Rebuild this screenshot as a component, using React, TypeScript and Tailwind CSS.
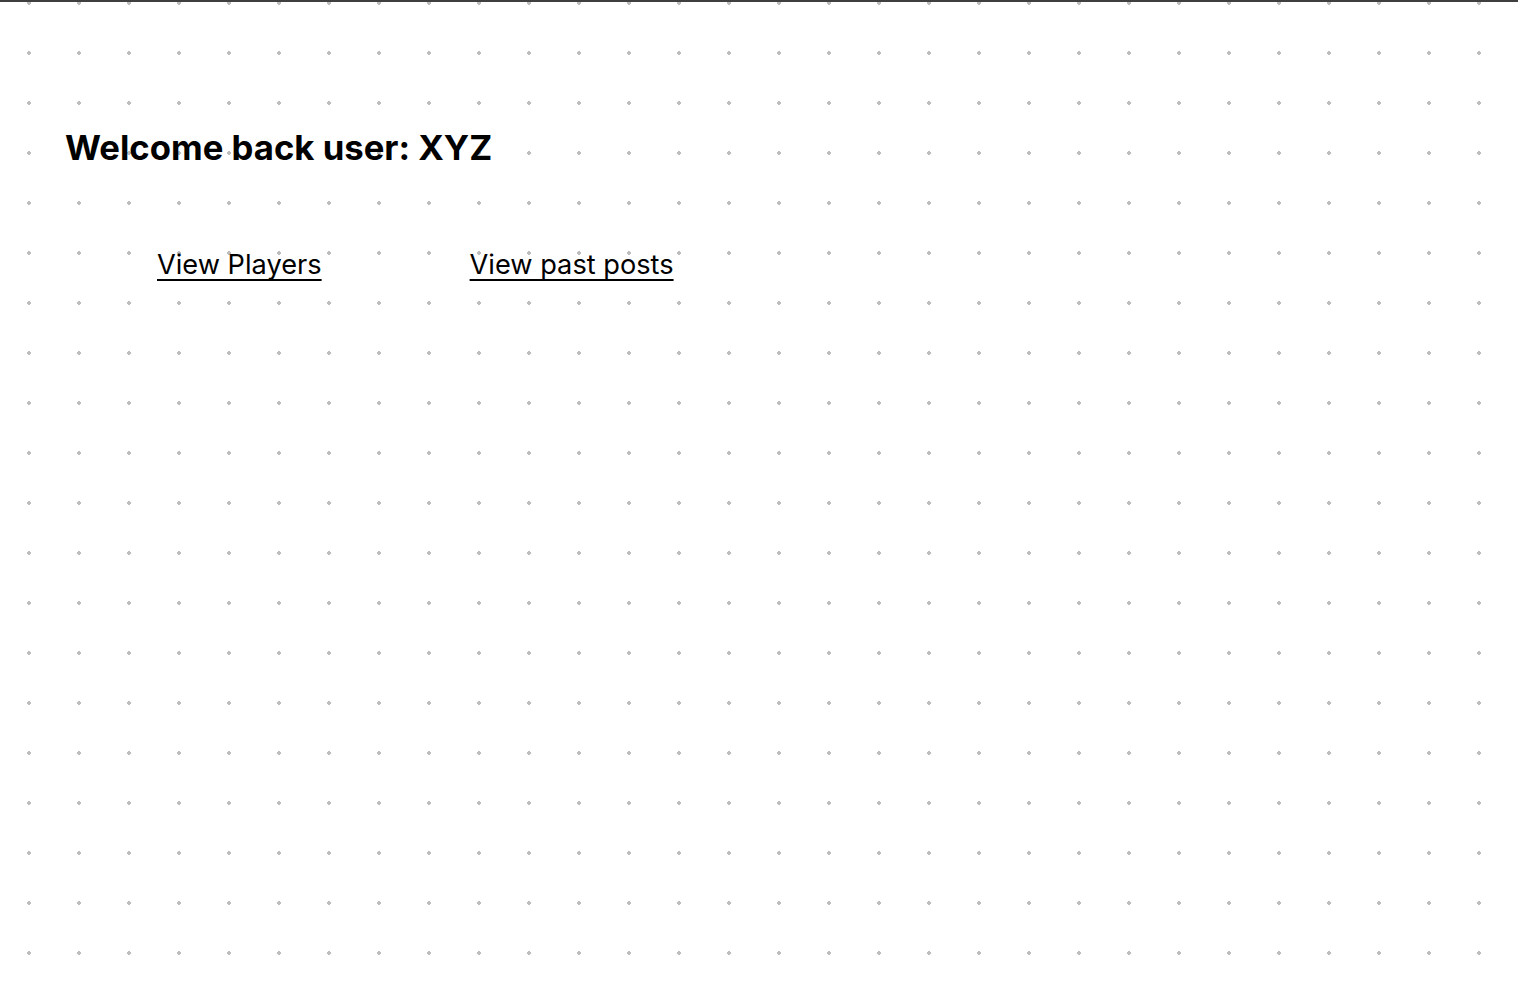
const Dashboard = () => {
  const links = ["View Players", "View past posts"];

  return (
    <div
      className="min-h-[996px] border-t-2 border-[#3f3f3f] bg-white bg-[radial-gradient(circle,#bdbdbd_1.6px,transparent_2px)] bg-[length:50px_50px] bg-[position:4px_-24px] text-black"
      style={{ fontFamily: "Inter, 'Noto Sans', sans-serif" }}
    >
      <div className="px-[65px] pt-[121px]">
        <h1 className="text-[34.7px] font-bold leading-[48px]">Welcome back user: XYZ</h1>
        <nav className="mt-[79px] flex gap-[148px] pl-[92px]">
          {links.map((label) => (
            <a
              key={label}
              href="#"
              className="text-[27.2px] leading-[30px] underline underline-offset-[5px] decoration-[2px] [text-decoration-skip-ink:none]"
            >
              {label}
            </a>
          ))}
        </nav>
      </div>
    </div>
  );
};

export default function App() {
  return <Dashboard />;
}
